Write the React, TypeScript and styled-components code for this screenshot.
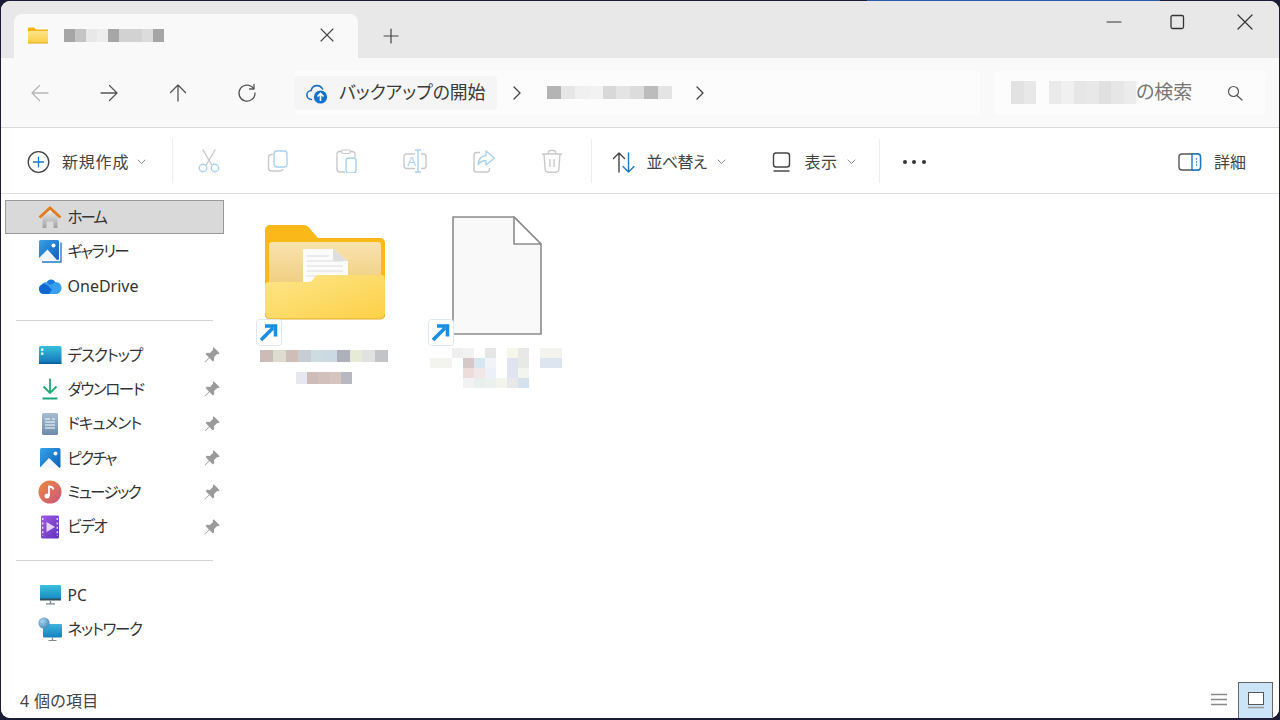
import React from "react";
import styled, { createGlobalStyle } from "styled-components";

const Global = createGlobalStyle`
  html, body { margin: 0; padding: 0; background: #1b1d36; overflow: hidden; }
  * { box-sizing: border-box; }
  #root { width: 1280px; height: 720px; }
`;

const Desktop = styled.div`
  width: 1280px; height: 720px; padding: 1px 1px 2px 1px;
  background: linear-gradient(90deg, #1b1d36 0, #1b1d36 867px, #2e5aa8 867px, #2e5aa8 1160px, #1b1d36 1160px) top / 100% 1px no-repeat, #1b1d36;
  font-family: "Noto Sans", "Noto Sans CJK JP", sans-serif;
  font-feature-settings: "palt";
  color: #333;
`;
const Win = styled.div`
  width: 100%; height: 100%; border-radius: 9px; overflow: hidden; background: #fff;
  display: flex; flex-direction: column;
`;
const TabBar = styled.div`
  height: 57px; flex: none; background: #e8e8e8; padding: 13px 0 0 13px; display: flex; align-items: stretch;
`;
const Tab = styled.div`
  width: 344px; background: #f9f9f9; border-radius: 8px 8px 0 0; display: flex; align-items: center;
  padding: 0 24px 0 14px;
`;
const TabIcon = styled.svg`width: 20px; height: 17px; margin: 0 16px 1px 0; flex: none;`;
const TabTitle = styled.div`margin-bottom: 2px; flex: none;`;
const TabClose = styled.svg`width: 14px; height: 14px; margin: 0 0 2px auto; flex: none;`;
const NewTab = styled.svg`width: 16px; height: 16px; margin: 14px 0 0 25px; flex: none;`;
const Captions = styled.div`margin-left: auto; display: flex; padding: 1px 26px 0 0; align-self: flex-start; margin-top: -13px; height: 40px; align-items: center;`;
const CaptionIcon = styled.svg<{ $gap?: number }>`width: 16px; height: 16px; margin-left: ${p => p.$gap ?? 0}px; flex: none;`;

const NavBar = styled.div`
  height: 70px; flex: none; background: #f9f9f9; border-bottom: 1px solid #d9d9d9;
  display: flex; align-items: center; padding: 0 14px 0 29px;
`;
const NavBtn = styled.svg<{ $dim?: boolean; $after?: number }>`
  width: 20px; height: 20px; flex: none; margin-right: ${p => p.$after ?? 49}px; color: ${p => p.$dim ? "#b5b5b5" : "#555"};
`;
const Address = styled.div`
  width: 686px; height: 44px; background: #fcfcfc; border-radius: 4px; display: flex; align-items: center; flex: none;
`;
const Crumb = styled.div`
  height: 34px; width: 203px; background: #f5f5f5; border-radius: 4px; display: flex; align-items: center; padding: 0 0 0 11px; gap: 10px; flex: none; margin-right: 14px;
`;
const CrumbText = styled.span`font-size: 17.8px; line-height: 1; white-space: nowrap; color: #3a3a3a;`;
const Chevron = styled.svg`width: 12px; height: 14px; flex: none; color: #444;`;
const Spacer = styled.span<{ $w: number }>`width: ${p => p.$w}px; flex: none;`;
const Search = styled.div`
  margin-left: 14px; flex: 1; height: 44px; background: #fcfcfc; border-radius: 4px; display: flex; align-items: center; padding: 0 22px 0 17px;
`;
const SearchText = styled.span`font-size: 19px; color: #777; line-height: 1; white-space: nowrap;`;
const SearchIcon = styled.svg`width: 16px; height: 16px; margin-left: auto; color: #555;`;

const Toolbar = styled.div`
  height: 66px; flex: none; background: #fff; border-bottom: 1px solid #e3e3e3; display: flex; align-items: center; padding: 2px 33px 0 26px;
`;
const PlainIcon = styled.svg`width: 24px; height: 24px; flex: none;`;
const ToolText = styled.span<{ $ls?: number; $ml?: number }>`
  font-size: 16px; color: #444; line-height: 1; white-space: nowrap; letter-spacing: ${p => p.$ls ?? 0}px; margin-left: ${p => p.$ml ?? 0}px;
`;
const Caret = styled.svg<{ $ml?: number }>`width: 9px; height: 6px; flex: none; color: #888; margin-left: ${p => p.$ml ?? 8}px;`;
const NewGroup = styled.div`display: flex; align-items: center; width: 145px; flex: none;`;
const Sep = styled.div`width: 1px; height: 44px; background: #eeeeee; flex: none; margin-top: -2px;`;
const ToolRun = styled.div`display: flex; padding: 0 4px 0 2px; flex: none;`;
const ToolBtn = styled.div`width: 68.6px; display: flex; justify-content: center; flex: none;`;
const Menu = styled.div<{ $w: number; $pl?: number }>`display: flex; align-items: center; width: ${p => p.$w}px; padding-left: ${p => p.$pl ?? 0}px; flex: none;`;
const More = styled.svg`width: 24px; height: 24px; margin-left: 22px; flex: none;`;
const Right = styled.div`margin-left: auto; display: flex; align-items: center; gap: 12px;`;

const Main = styled.div`flex: 1; display: flex; min-height: 0;`;
const Side = styled.nav`width: 224px; flex: none; padding: 6px 0 0 4px;`;
const NavRow = styled.div<{ $sel?: boolean }>`
  width: 219px; height: 34.3px; display: flex; align-items: center; padding: 0 2px 0 32px; font-size: 15.5px;
  border: 1px solid ${p => p.$sel ? "#999" : "transparent"}; background: ${p => p.$sel ? "#d9d9d9" : "transparent"};
  color: #333;
`;
const NavLabel = styled.span<{ $ls?: number; $fs?: number }>`
  margin-left: 5.5px; white-space: nowrap; line-height: 1; padding-top: 1px;
  letter-spacing: ${p => p.$ls ?? 0}px; font-size: ${p => p.$fs ?? 15.5}px;
`;
const NavIcon = styled.svg`width: 24px; height: 24px; flex: none;`;
const Pin = styled.svg`width: 18px; height: 18px; margin-left: auto; flex: none;`;
const Divider = styled.hr<{ $my: number }>`border: 0; height: 1px; background: #d4d4d4; margin: ${p => p.$my}px 0 ${p => p.$my}px 11px; width: 197px;`;

const Content = styled.main`flex: 1; display: flex; gap: 36px; padding: 22px 0 0 31px; align-items: flex-start;`;
const Tile = styled.div`width: 136px; display: flex; flex-direction: column; align-items: center; flex: none;`;
const Thumb = styled.div`width: 136px; height: 129px; position: relative;`;
const Art = styled.svg<{ $l: number; $t: number }>`position: absolute; left: ${p => p.$l}px; top: ${p => p.$t}px;`;
const Shortcut = styled.svg`position: absolute; left: 0; top: 103px; width: 26px; height: 27px;`;
const Mosaic = styled.div<{ $cols: number; $w: number; $h: number }>`
  display: grid; grid-template-columns: repeat(${p => p.$cols}, ${p => p.$w}px); grid-auto-rows: ${p => p.$h}px;
  filter: blur(.7px); flex: none;
`;
const Cell = styled.i<{ $c: string }>`display: block; background: ${p => p.$c};`;
const LabelStack = styled.div<{ $mt: number }>`display: flex; flex-direction: column; align-items: center; gap: 10px; margin-top: ${p => p.$mt}px;`;

const Status = styled.footer`
  height: 36px; flex: none; display: flex; align-items: center; padding: 0 6px 0 19px; background: #fff;
  font-size: 16px; color: #444; letter-spacing: .3px;
`;
const ViewIcon = styled.svg`width: 16px; height: 16px; margin-left: auto; margin-right: 11px; flex: none;`;
const ViewActive = styled.div`
  width: 35px; height: 36px; background: #cce4f7; border: 1px solid #666; border-bottom: 0; display: flex; align-items: center; justify-content: center; flex: none;
`;

const MosaicBlock: React.FC<{ cols: number; w: number; h: number; cells: string[] }> = ({ cols, w, h, cells }) => (
  <Mosaic $cols={cols} $w={w} $h={h} aria-hidden>
    {cells.map((c, i) => <Cell key={i} $c={c} />)}
  </Mosaic>
);

const Line: React.FC<{ d: string; c?: string; w?: number }> = ({ d, c = "currentColor", w = 1.2 }) => (
  <path d={d} fill="none" stroke={c} strokeWidth={w} strokeLinecap="round" strokeLinejoin="round" />
);

const GR = "#c9c9c9", BL = "#a9d2ef";

const Arrow = (dir: "l" | "r" | "u") => {
  const d = dir === "l" ? "M2 10H18M9.5 2.5L2 10L9.5 17.5" : dir === "r" ? "M2 10H18M10.5 2.5L18 10L10.5 17.5" : "M10 18V2M2.5 9.5L10 2L17.5 9.5";
  return <Line d={d} w={1.3} />;
};

const pinPath = "M9.5 1.2 L14.8 6.5 L13.6 7.4 L12.6 7 L9.8 9.8 L9.9 12.6 L8.8 13.7 L5.8 10.7 L1.8 14.6 L1.4 14.2 L5.3 10.2 L2.3 7.2 L3.4 6.1 L6.2 6.2 L9 3.4 L8.6 2.4 Z";

const ShortcutIcon = () => (
  <>
    <rect x=".5" y=".5" width="25" height="26" rx="3" fill="#fff" stroke="#dfe6ec" />
    <path d="M5 21 L17 9 M9 7 H19.5 V17.5" fill="none" stroke="#1a8fe0" strokeWidth="3.6" />
  </>
);

const PinIcon = () => <Pin viewBox="0 0 16 16"><path d={pinPath} fill="#9a9a9a" /></Pin>;

const CaretIcon: React.FC<{ ml?: number }> = ({ ml }) => (
  <Caret $ml={ml} viewBox="0 0 9 6"><Line d="M1 1L4.500 4.500L8 1" w={1} /></Caret>
);

export default function App() {
  return (
    <Desktop>
      <Global />
      <Win>
        <TabBar>
          <Tab>
            <TabIcon viewBox="0 0 20 17">
              <defs><linearGradient id="tf" x1="0" y1="0" x2="0" y2="1"><stop offset="0" stopColor="#fde48a" /><stop offset="1" stopColor="#fbcf45" /></linearGradient></defs>
              <path d="M0 1.5a1 1 0 0 1 1-1h5l2 2h12V15.5H0Z" fill="#f5b31a" />
              <rect x="0" y="4" width="20" height="12" fill="url(#tf)" />
              <rect x="0" y="15.5" width="20" height="1" fill="#e3a51e" />
            </TabIcon>
            <TabTitle>
              <MosaicBlock cols={9} w={11.1} h={13} cells={["#a6a6a6", "#c4c4c4", "#e8e8e8", "#ededed", "#a6a6a6", "#d2d2d2", "#d2d2d2", "#dcdcdc", "#a6a6a6"]} />
            </TabTitle>
            <TabClose viewBox="0 0 14 14"><Line d="M1 1L13 13M13 1L1 13" c="#444" w={1.1} /></TabClose>
          </Tab>
          <NewTab viewBox="0 0 16 16"><Line d="M8 1V15M1 8H15" c="#444" w={1.2} /></NewTab>
          <Captions>
            <CaptionIcon viewBox="0 0 16 16"><Line d="M1 8H15" c="#333" w={1} /></CaptionIcon>
            <CaptionIcon $gap={47} viewBox="0 0 16 16"><rect x="2" y="1.5" width="12.5" height="13" rx="1.5" fill="none" stroke="#333" strokeWidth="1.3" /></CaptionIcon>
            <CaptionIcon $gap={52} viewBox="0 0 16 16"><Line d="M1 1L15 15M15 1L1 15" c="#333" w={1.2} /></CaptionIcon>
          </Captions>
        </TabBar>

        <NavBar>
          <NavBtn $dim viewBox="0 0 20 20">{Arrow("l")}</NavBtn>
          <NavBtn viewBox="0 0 20 20">{Arrow("r")}</NavBtn>
          <NavBtn viewBox="0 0 20 20">{Arrow("u")}</NavBtn>
          <NavBtn $after={37} viewBox="0 0 20 20">
            <Line d="M16.5 5.5A8 8 0 1 0 18 10" w={1.3} /><Line d="M17 1.5V6H12.5" w={1.3} />
          </NavBtn>
          <Address>
            <Crumb>
              <PlainIcon viewBox="0 0 24 24">
                <path d="M6.5 18.5a4.5 4.5 0 0 1-.3-9A6 6 0 0 1 17.5 8" fill="none" stroke="#1f6fc0" strokeWidth="1.6" strokeLinecap="round" />
                <circle cx="15.5" cy="16" r="6.6" fill="#1372c9" />
                <path d="M15.5 20V12.5M12.5 15.5L15.5 12.5L18.5 15.5" fill="none" stroke="#fff" strokeWidth="1.6" />
              </PlainIcon>
              <CrumbText>バックアップの開始</CrumbText>
            </Crumb>
            <Chevron viewBox="0 0 12 14"><Line d="M3 1L9 7L3 13" w={1.3} /></Chevron>
            <Spacer $w={24} />
            <MosaicBlock cols={9} w={13.9} h={13} cells={["#b4b4b4", "#e6e6e6", "#f0f0f0", "#f2f2f2", "#d8d8d8", "#e4e4e4", "#dcdcdc", "#bcbcbc", "#e4e4e4"]} />
            <Spacer $w={22} />
            <Chevron viewBox="0 0 12 14"><Line d="M3 1L9 7L3 13" w={1.3} /></Chevron>
          </Address>
          <Search>
            <MosaicBlock cols={10} w={12.5} h={23} cells={["#e2e2e2", "#e8e8e8", "#fcfcfc", "#eaeaea", "#f0f0f0", "#e6e6e6", "#e8e8e8", "#e0e0e0", "#e6e6e6", "#ececec"]} />
            <SearchText>の検索</SearchText>
            <SearchIcon viewBox="0 0 16 16"><circle cx="6.5" cy="6.5" r="5" fill="none" stroke="currentColor" strokeWidth="1.2" /><Line d="M10 10.5L15 15" w={1.2} /></SearchIcon>
          </Search>
        </NavBar>

        <Toolbar>
          <NewGroup>
            <PlainIcon viewBox="0 0 24 24">
              <circle cx="11.5" cy="12" r="10.3" fill="none" stroke="#444" strokeWidth="1.3" />
              <path d="M11.5 6.5V17.5M6 12H17" stroke="#1a78c8" strokeWidth="1.3" />
            </PlainIcon>
            <ToolText $ml={11} $ls={0.8}>新規作成</ToolText>
            <CaretIcon />
          </NewGroup>
          <Sep />
          <ToolRun>
            <ToolBtn>
              <PlainIcon viewBox="0 0 24 26" style={{ height: 26 }}>
                <Line d="M6 1L14.5 15.5M18 1L9.5 15.5" c={GR} w={1.4} />
                <circle cx="6" cy="19" r="3.7" fill="none" stroke={BL} strokeWidth="1.4" />
                <circle cx="18" cy="19" r="3.7" fill="none" stroke={BL} strokeWidth="1.4" />
              </PlainIcon>
            </ToolBtn>
            <ToolBtn>
              <PlainIcon viewBox="0 0 24 24">
                <path d="M7 5.5H5.5a3 3 0 0 0-3 3V19a3 3 0 0 0 3 3H14a3 3 0 0 0 3-2" fill="none" stroke={GR} strokeWidth="1.4" />
                <rect x="8" y="2" width="13" height="16" rx="3" fill="none" stroke={BL} strokeWidth="1.4" />
              </PlainIcon>
            </ToolBtn>
            <ToolBtn>
              <PlainIcon viewBox="0 0 24 24">
                <path d="M11 23H6a3 3 0 0 1-3-3V5a2.500 2.500 0 0 1 2.500-2.500h13A2.500 2.500 0 0 1 21 5v3" fill="none" stroke={GR} strokeWidth="1.4" />
                <rect x="7.500" y="1" width="9" height="3.500" rx="1.500" fill="#fff" stroke={GR} strokeWidth="1.2" />
                <rect x="12" y="9" width="10" height="15" rx="2.500" fill="#fff" stroke={BL} strokeWidth="1.4" />
              </PlainIcon>
            </ToolBtn>
            <ToolBtn>
              <PlainIcon viewBox="0 0 24 24">
                <path d="M12 5H3.500A2.500 2.500 0 0 0 1 7.500V17a2.500 2.500 0 0 0 2.500 2.500H12M18 5h2.500A2.500 2.500 0 0 1 23 7.500V17a2.500 2.500 0 0 1-2.500 2.500H18" fill="none" stroke={GR} strokeWidth="1.4" />
                <text x="8.500" y="16.500" textAnchor="middle" fontSize="13" fontFamily="Liberation Sans" fill={BL}>A</text>
                <path d="M15 1V23M12 1H18M12 23H18" fill="none" stroke={BL} strokeWidth="1.4" />
              </PlainIcon>
            </ToolBtn>
            <ToolBtn>
              <PlainIcon viewBox="0 0 24 24">
                <path d="M8 3.500H4.500A2.500 2.500 0 0 0 2 6v14.500A2.500 2.500 0 0 0 4.500 23H15a2.500 2.500 0 0 0 2.500-2.500V19" fill="none" stroke={GR} strokeWidth="1.4" />
                <path d="M14 2V6.500C9 7 6.500 10 6 15.500C8.500 12.500 11 11.500 14 11.500V16L22.500 9Z" fill="none" stroke={BL} strokeWidth="1.4" strokeLinejoin="round" />
              </PlainIcon>
            </ToolBtn>
            <ToolBtn>
              <PlainIcon viewBox="0 0 24 24">
                <path d="M2 5H22M8.500 5V3.500A2 2 0 0 1 10.500 1.500h3a2 2 0 0 1 2 2V5M4 5L5.200 20.500A3 3 0 0 0 8.200 23.200H15.800A3 3 0 0 0 18.800 20.500L20 5M10 10V18M14 10V18" fill="none" stroke={GR} strokeWidth="1.4" />
              </PlainIcon>
            </ToolBtn>
          </ToolRun>
          <Sep />
          <Menu $w={178} $pl={20}>
            <PlainIcon viewBox="0 0 24 24">
              <Line d="M7 22V3M1.500 8.500L7 3L12.500 8.500" c="#444" w={1.4} />
              <Line d="M16.500 3V22M11 16.500L16.500 22L22 16.500" c="#1a78c8" w={1.4} />
            </PlainIcon>
            <ToolText $ml={11} $ls={-0.7}>並べ替え</ToolText>
            <CaretIcon ml={10} />
          </Menu>
          <Menu $w={109}>
            <PlainIcon viewBox="0 0 24 24">
              <rect x="3.500" y="3" width="16" height="14" rx="2.500" fill="none" stroke="#444" strokeWidth="1.4" />
              <path d="M3.500 21H19.500" stroke="#777" strokeWidth="1.800" />
            </PlainIcon>
            <ToolText $ml={11} $ls={0.5}>表示</ToolText>
            <CaretIcon ml={9} />
          </Menu>
          <Sep />
          <More viewBox="0 0 24 24">
            <circle cx="3" cy="12" r="2" fill="#333" /><circle cx="12" cy="12" r="2" fill="#333" /><circle cx="22" cy="12" r="2" fill="#333" />
          </More>
          <Right>
            <PlainIcon viewBox="0 0 24 24">
              <rect x="1" y="4" width="21.500" height="16" rx="3" fill="none" stroke="#555" strokeWidth="1.4" />
              <path d="M14 4H19.500A3 3 0 0 1 22.500 7V17A3 3 0 0 1 19.500 20H14Z" fill="#fff" stroke="#1a78c8" strokeWidth="1.4" />
              <path d="M18 9H19M18 12H19M18 15H19" stroke="#1a78c8" strokeWidth="1.3" />
            </PlainIcon>
            <ToolText>詳細</ToolText>
          </Right>
        </Toolbar>

        <Main>
          <Side>
            <NavRow $sel>
              <NavIcon viewBox="0 0 24 24">
                <defs><linearGradient id="hb" x1="0" y1="0" x2="0" y2="1"><stop offset="0" stopColor="#eeeeee" /><stop offset="1" stopColor="#a0a0a0" /></linearGradient></defs>
                <path d="M4.500 11.500L12 4.500L19.500 11.500V23H15.500V16.500H8.500V23H4.500Z" fill="url(#hb)" />
                <path d="M1.500 12.500L12 3L22.500 12.500" fill="none" stroke="#e27d1e" strokeWidth="2.800" />
              </NavIcon>
              <NavLabel $ls={-2}>ホーム</NavLabel>
            </NavRow>
            <NavRow>
              <NavIcon viewBox="0 0 24 24">
                <defs><linearGradient id="gb" x1="0" y1="0" x2="1" y2="1"><stop offset="0" stopColor="#3aa0e8" /><stop offset="1" stopColor="#0d5fb8" /></linearGradient></defs>
                <rect x="1" y="1" width="20" height="20" rx="1.500" fill="url(#gb)" />
                <path d="M23 3.500V23H4" fill="none" stroke="#2478c8" strokeWidth="1.400" />
                <path d="M1 19L9.500 10.500L19 21H1Z" fill="#eef4fb" />
                <circle cx="15.500" cy="6.500" r="2" fill="#fff" />
              </NavIcon>
              <NavLabel $ls={-1.6}>ギャラリー</NavLabel>
            </NavRow>
            <NavRow>
              <NavIcon viewBox="0 0 24 24">
                <path d="M5.500 20A5 5 0 0 1 4 10.500C5 8.500 7 8 8.500 8.500C10 5 15 4.500 17 8C20.500 7.500 24 10.500 23.500 14.500C23.200 17.500 21 20 18 20Z" fill="#36a0ee" />
                <path d="M5.500 20A5 5 0 0 1 4 10.500C6 9.500 8 10 10 12L14 15.500L11 20Z" fill="#1068d0" />
                <path d="M9 9C10 5.500 15 4.500 17 8L13 11Z" fill="#1f78de" />
              </NavIcon>
              <NavLabel $fs={16}>OneDrive</NavLabel>
            </NavRow>
            <Divider $my={17} />
            <NavRow>
              <NavIcon viewBox="0 0 24 24">
                <defs><linearGradient id="db" x1="0" y1="0" x2="0" y2="1"><stop offset="0" stopColor="#35c0da" /><stop offset="1" stopColor="#1272b8" /></linearGradient></defs>
                <rect x="1" y="3" width="22.500" height="18" rx="1.500" fill="url(#db)" />
                <rect x="3" y="5.500" width="2.400" height="2.400" fill="#dff5fa" /><rect x="3" y="9.500" width="2.400" height="2.400" fill="#dff5fa" />
                <rect x="1" y="19.500" width="22.500" height="1.500" fill="#0e5c96" />
              </NavIcon>
              <NavLabel $ls={-1}>デスクトップ</NavLabel><PinIcon />
            </NavRow>
            <NavRow>
              <NavIcon viewBox="0 0 24 24">
                <path d="M12 1.500V16M5.500 9.500L12 16L18.500 9.500" fill="none" stroke="#1fa873" strokeWidth="1.800" />
                <path d="M4.500 21.500H19.500" stroke="#1aa57c" strokeWidth="2" />
              </NavIcon>
              <NavLabel $ls={-1.4}>ダウンロード</NavLabel><PinIcon />
            </NavRow>
            <NavRow>
              <NavIcon viewBox="0 0 24 24">
                <defs><linearGradient id="ddoc" x1="0" y1="0" x2="0" y2="1"><stop offset="0" stopColor="#a8bdd3" /><stop offset="1" stopColor="#6d8cab" /></linearGradient></defs>
                <rect x="4" y="1" width="16" height="22" rx="1.500" fill="url(#ddoc)" />
                <path d="M7 7H12M14 7H17M7 10H17M7 13H17M7 16H17" stroke="#fff" strokeWidth="1.200" />
              </NavIcon>
              <NavLabel $ls={-0.9}>ドキュメント</NavLabel><PinIcon />
            </NavRow>
            <NavRow>
              <NavIcon viewBox="0 0 24 24">
                <defs><linearGradient id="pb" x1="0" y1="0" x2="1" y2="1"><stop offset="0" stopColor="#36a3ea" /><stop offset="1" stopColor="#0b5fb6" /></linearGradient></defs>
                <rect x="2" y="2" width="20.500" height="20" rx="1.500" fill="url(#pb)" />
                <path d="M2 21.500L11 12L21.500 22H2Z" fill="#f3f7fc" />
                <circle cx="17.500" cy="7.500" r="2" fill="#fff" />
              </NavIcon>
              <NavLabel $ls={-1.7}>ピクチャ</NavLabel><PinIcon />
            </NavRow>
            <NavRow>
              <NavIcon viewBox="0 0 24 24">
                <defs><linearGradient id="mb" x1="0" y1="0" x2="1" y2="1"><stop offset="0" stopColor="#ee8a3c" /><stop offset="1" stopColor="#c9557e" /></linearGradient></defs>
                <circle cx="12" cy="12" r="11.500" fill="url(#mb)" />
                <path d="M11 16V6.500C13 6.500 15 7.500 15.500 9.500" fill="none" stroke="#fff" strokeWidth="1.800" />
                <circle cx="9" cy="16" r="2.500" fill="#fff" />
              </NavIcon>
              <NavLabel $ls={-1.6}>ミュージック</NavLabel><PinIcon />
            </NavRow>
            <NavRow>
              <NavIcon viewBox="0 0 24 24">
                <defs><linearGradient id="vb" x1="0" y1="0" x2="1" y2="1"><stop offset="0" stopColor="#a25ce0" /><stop offset="1" stopColor="#5d30c0" /></linearGradient></defs>
                <rect x="3" y="0.500" width="18" height="23" rx="1.500" fill="url(#vb)" />
                <path d="M4.700 3V21M19.300 3V21" stroke="#e4d2fa" strokeWidth="1.500" strokeDasharray="2 2.400" />
                <path d="M8.500 7L17 12L8.500 17Z" fill="#e6d2fa" />
              </NavIcon>
              <NavLabel $ls={-1.3}>ビデオ</NavLabel><PinIcon />
            </NavRow>
            <Divider $my={16.5} />
            <NavRow>
              <NavIcon viewBox="0 0 24 24">
                <defs><linearGradient id="pcb" x1="0" y1="0" x2="0" y2="1"><stop offset="0" stopColor="#3bc0da" /><stop offset="1" stopColor="#1487c2" /></linearGradient></defs>
                <rect x="2" y="2" width="21" height="15" rx="1" fill="url(#pcb)" />
                <rect x="2" y="15.500" width="21" height="2" fill="#33505f" />
                <path d="M12.500 17.500V20.500M8 20.800H17" stroke="#7a8a94" strokeWidth="1.300" />
              </NavIcon>
              <NavLabel>PC</NavLabel>
            </NavRow>
            <NavRow>
              <NavIcon viewBox="0 0 24 24">
                <defs>
                  <linearGradient id="nb" x1="0" y1="0" x2="0" y2="1"><stop offset="0" stopColor="#3fb5dc" /><stop offset="1" stopColor="#1480bc" /></linearGradient>
                  <radialGradient id="ng" cx=".35" cy=".35" r=".8"><stop offset="0" stopColor="#a4d4ee" /><stop offset="1" stopColor="#3c7fb0" /></radialGradient>
                </defs>
                <rect x="5" y="7" width="19" height="13.500" rx="1" fill="url(#nb)" />
                <path d="M14.500 20.500V23M10.500 23.500H18.500" stroke="#7a8a94" strokeWidth="1.200" />
                <circle cx="6" cy="6" r="5.600" fill="url(#ng)" />
              </NavIcon>
              <NavLabel $ls={-1.3}>ネットワーク</NavLabel>
            </NavRow>
          </Side>

          <Content>
            <Tile>
              <Thumb>
                <Art $l={9} $t={9} viewBox="0 0 120 95" width="120" height="95">
                  <defs>
                    <linearGradient id="fp" x1="0" y1="0" x2="0" y2="1"><stop offset="0" stopColor="#f9e2ae" /><stop offset="1" stopColor="#eecb78" /></linearGradient>
                    <linearGradient id="ff" x1="0" y1="0" x2="1" y2="1"><stop offset="0" stopColor="#fce68a" /><stop offset="1" stopColor="#fdd046" /></linearGradient>
                  </defs>
                  <path d="M5 0H38C42 0 44 2 46 5L53 13H115a5 5 0 0 1 5 5V85H0V5a5 5 0 0 1 5-5Z" fill="#fab819" />
                  <rect x="4" y="17" width="112" height="50" rx="3" fill="url(#fp)" />
                  <path d="M38 24H68L83 36V57H38Z" fill="#fbfbfb" />
                  <path d="M68 24V36H83Z" fill="#dedede" />
                  <path d="M42 31H64M42 36H78M42 41H78M42 46H78M42 51H78" stroke="#dcdcdc" strokeWidth="1" />
                  <path d="M0 61a4 4 0 0 1 4-4H43C46 57 47 56 49 53C50 51 52 50 54 50H116a4 4 0 0 1 4 4V90a4 4 0 0 1-4 4H5a5 5 0 0 1-5-5Z" fill="url(#ff)" />
                  <path d="M0 89a5 5 0 0 0 5 5H115a5 5 0 0 0 5-5" fill="none" stroke="#e2ab28" strokeWidth="1" />
                </Art>
                <Shortcut viewBox="0 0 26 27"><ShortcutIcon /></Shortcut>
              </Thumb>
              <LabelStack $mt={5}>
                <MosaicBlock cols={10} w={12.800} h={12} cells={["#cbbcb8", "#dcdcd0", "#d0bdb8", "#c8ccd4", "#cddbe2", "#ccd8e4", "#aeb0bc", "#e8ead8", "#dfe2e0", "#c2c4c8"]} />
                <MosaicBlock cols={5} w={11.400} h={12} cells={["#e6e8ef", "#cdbcb8", "#d2c0bb", "#d6c4c0", "#b8b8c0"]} />
              </LabelStack>
            </Tile>
            <Tile>
              <Thumb>
                <Art $l={24} $t={0} viewBox="0 0 90 120" width="90" height="120">
                  <path d="M1 1H62L89 28V118H1Z" fill="#f9f9f9" stroke="#8c8c8c" strokeWidth="1.600" />
                  <path d="M62 1V28H89Z" fill="#fff" stroke="#8c8c8c" strokeWidth="1.600" strokeLinejoin="round" />
                </Art>
                <Shortcut viewBox="0 0 26 27"><ShortcutIcon /></Shortcut>
              </Thumb>
              <LabelStack $mt={3}>
                <MosaicBlock cols={12} w={11} h={10} cells={[
                  "#fff", "#fff", "#eee", "#f2f2f2", "#fff", "#e6e6e6", "#fff", "#f6f6ea", "#e8e8e8", "#fff", "#f4f4ee", "#f4f4ee",
                  "#f4f4ee", "#f4f4ee", "#fff", "#d6c8c8", "#d8e6f0", "#f0f4f8", "#fff", "#dfe4f0", "#e8e8e4", "#fff", "#dde6f0", "#dde6f0",
                  "#fff", "#fff", "#fff", "#ecdcdc", "#f0e8e8", "#ecf0f8", "#fff", "#dfe4f0", "#f4f4ee", "#fff", "#fff", "#fff",
                  "#fff", "#fff", "#fff", "#f2f2f2", "#e8f0ee", "#ecf0ee", "#f4f4ee", "#e8e8e8", "#d4e2ee", "#fff", "#fff", "#fff"
                ]} />
              </LabelStack>
            </Tile>
          </Content>
        </Main>

        <Status>
          <span>4 個の項目</span>
          <ViewIcon viewBox="0 0 16 16"><path d="M0 2.500H16M0 7.500H16M0 12.500H16" stroke="#888" strokeWidth="1.300" /></ViewIcon>
          <ViewActive>
            <svg viewBox="0 0 16 17" width="16" height="17"><rect x=".5" y=".5" width="15" height="12" fill="#fff" stroke="#555" /><path d="M0 15.500H16" stroke="#999" strokeWidth="1.500" /></svg>
          </ViewActive>
        </Status>
      </Win>
    </Desktop>
  );
}
